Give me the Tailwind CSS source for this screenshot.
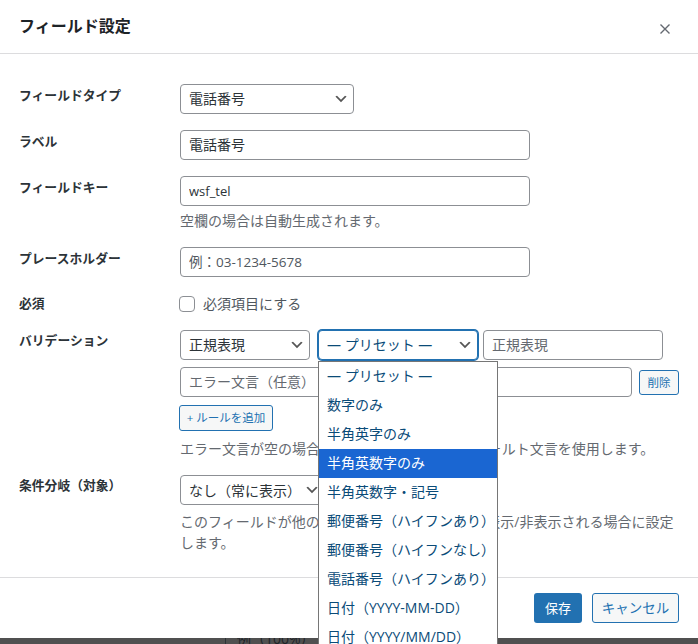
<!DOCTYPE html>
<html lang="ja">
<head>
<meta charset="utf-8">
<title>フィールド設定</title>
<script src="https://cdn.jsdelivr.net/npm/@tailwindcss/browser@4"></script>
</head>
<body class="bg-[#505050] font-['Open_Sans','Noto_Sans_CJK_JP',sans-serif] text-[14px] leading-[21px] text-[#2c3338] overflow-hidden">
<div class="relative w-[698px] h-[644px] overflow-hidden">
  <div class="absolute left-[225px] top-[629px] h-[15px] text-[14px] leading-[20px] text-[#1d2327] border-l border-[#2c3338] pl-[11px]">例（100%）</div>
  <div class="relative bg-white h-[638px] w-[698px]">
    <header class="h-[54px] border-b border-[#dcdcde] flex items-center justify-between pl-[19px] pr-[26px]">
      <h2 class="text-[16px] font-semibold leading-[24px] -mt-[1px] text-[#1d2327]">フィールド設定</h2>
      <svg class="w-[14px] h-[14px] mt-[4px] text-[#646970]" viewBox="0 0 14 14" fill="none" stroke="currentColor" stroke-width="1.4"><path d="M2.5 2.5l9 9M11.5 2.5l-9 9"/></svg>
    </header>
    <main class="pt-[30px] pl-[19px] h-[524px] border-b border-[#dcdcde]">
      <div class="flex mb-[16px]">
        <label class="w-[161px] font-semibold text-[12.8px] leading-[21px] pt-[1px] text-[#2c3338]">フィールドタイプ</label>
        <div class="relative w-[174px]">
          <select class="appearance-none w-full h-[30px] border border-[#8c8f94] rounded-[4px] bg-white pl-[8px] leading-[28px]"><option>電話番号</option></select>
          <svg class="absolute right-[5px] top-[7px] w-[16px] h-[16px] pointer-events-none" viewBox="0 0 20 20" fill="#555"><path d="M5 6l5 5 5-5 2 1-7 7-7-7 2-1z"/></svg>
        </div>
      </div>
      <div class="flex mb-[16px]">
        <label class="w-[161px] font-semibold text-[12.8px] leading-[21px] pt-[1px]">ラベル</label>
        <input class="w-[350px] h-[30px] border border-[#8c8f94] rounded-[4px] px-[8px] pb-[2px]" value="電話番号">
      </div>
      <div class="flex mb-[16px]">
        <label class="w-[161px] font-semibold text-[12.8px] leading-[21px] pt-[1px]">フィールドキー</label>
        <div>
          <input class="block w-[350px] h-[30px] border border-[#8c8f94] rounded-[4px] px-[8px] text-[13px]" value="wsf_tel">
          <p class="mt-[4px] text-[#646970]">空欄の場合は自動生成されます。</p>
        </div>
      </div>
      <div class="flex mb-[16px]">
        <label class="w-[161px] font-semibold text-[12.8px] leading-[21px] pt-[1px]">プレースホルダー</label>
        <input class="w-[350px] h-[30px] border border-[#8c8f94] rounded-[4px] px-[8px] text-[13.5px] placeholder:text-[#50575e]" placeholder="例：03-1234-5678">
      </div>
      <div class="flex mb-[16px]">
        <label class="w-[161px] font-semibold text-[12.8px] leading-[21px]">必須</label>
        <label class="flex items-center text-[#50575e]">
          <span class="w-[16px] h-[16px] -ml-[1px] border border-[#8c8f94] rounded-[4px] bg-white mr-[8px]"></span>必須項目にする
        </label>
      </div>
      <div class="flex mb-[16px]">
        <label class="w-[161px] font-semibold text-[12.8px] leading-[21px]">バリデーション</label>
        <div>
          <div class="flex gap-[8px] mb-[7px]">
            <div class="relative w-[130px]">
              <select class="appearance-none w-full h-[30px] border border-[#8c8f94] rounded-[4px] bg-white pl-[8px] pb-[2px]"><option>正規表現</option></select>
              <svg class="absolute right-[5px] top-[7px] w-[16px] h-[16px] pointer-events-none" viewBox="0 0 20 20" fill="#555"><path d="M5 6l5 5 5-5 2 1-7 7-7-7 2-1z"/></svg>
            </div>
            <div class="relative w-[160px]">
              <select class="appearance-none w-full h-[30px] border border-[#2271b1] shadow-[0_0_0_1px_#2271b1] rounded-[4px] bg-white pl-[8px] pb-[2px] text-[#0a4b78]"><option>— プリセット —</option></select>
              <svg class="absolute right-[5px] top-[7px] w-[16px] h-[16px] pointer-events-none" viewBox="0 0 20 20" fill="#555"><path d="M5 6l5 5 5-5 2 1-7 7-7-7 2-1z"/></svg>
            </div>
            <input class="w-[180px] h-[30px] border border-[#8c8f94] rounded-[4px] px-[8px] pb-[2px] -ml-[3px] placeholder:text-[#646970]" placeholder="正規表現">
          </div>
          <div class="flex items-center gap-[7px] mb-[8px]">
            <input class="w-[452px] h-[30px] border border-[#8c8f94] rounded-[4px] px-[8px] pb-[2px] placeholder:text-[#646970]" placeholder="エラー文言（任意）">
            <button class="w-[40px] h-[25px] border border-[#2271b1] rounded-[3px] bg-[#f6f7f7] text-[#2271b1] text-[11.5px] leading-[23px]">削除</button>
          </div>
          <button class="block w-[94px] h-[26px] -ml-[1px] border border-[#2271b1] rounded-[3px] bg-[#f6f7f7] text-[#2271b1] text-[11.5px] leading-[24px]">+ ルールを追加</button>
          <p class="mt-[7px] text-[#646970] whitespace-nowrap">エラー文言が空の場合はバリデーション毎のデフォルト文言を使用します。</p>
        </div>
      </div>
      <div class="flex">
        <label class="w-[161px] font-semibold text-[12.8px] leading-[21px]">条件分岐（対象）</label>
        <div class="w-[497px]">
          <div class="relative w-[145px]">
            <select class="appearance-none w-full h-[30px] border border-[#8c8f94] rounded-[4px] bg-white pl-[8px]"><option>なし（常に表示）</option></select>
            <svg class="absolute right-[5px] top-[7px] w-[16px] h-[16px] pointer-events-none" viewBox="0 0 20 20" fill="#555"><path d="M5 6l5 5 5-5 2 1-7 7-7-7 2-1z"/></svg>
          </div>
          <p class="mt-[6px] text-[#646970]">このフィールドが他のフィールドの入力によって表示/非表示される場合に設定します。</p>
        </div>
      </div>
    </main>
    <footer class="flex justify-end gap-[10px] pt-[15px] pr-[19px]">
      <button class="w-[48px] h-[30px] rounded-[3px] bg-[#2271b1] text-white text-[13px]">保存</button>
      <button class="w-[87px] h-[30px] rounded-[3px] border border-[#2271b1] bg-[#f6f7f7] text-[#2271b1] text-[13.5px]">キャンセル</button>
    </footer>
    <ul class="absolute left-[318px] top-[361px] w-[180px] border border-[#767676] bg-white text-[#0a4b78]">
      <li class="h-[29px] pl-[8px] leading-[27px]">— プリセット —</li>
      <li class="h-[29px] pl-[8px] leading-[27px]">数字のみ</li>
      <li class="h-[29px] pl-[8px] leading-[27px]">半角英字のみ</li>
      <li class="h-[29px] pl-[8px] leading-[27px] bg-[#1a66d2] text-white">半角英数字のみ</li>
      <li class="h-[29px] pl-[8px] leading-[27px]">半角英数字・記号</li>
      <li class="h-[29px] pl-[8px] leading-[27px]">郵便番号（ハイフンあり）</li>
      <li class="h-[29px] pl-[8px] leading-[27px]">郵便番号（ハイフンなし）</li>
      <li class="h-[29px] pl-[8px] leading-[27px]">電話番号（ハイフンあり）</li>
      <li class="h-[29px] pl-[8px] leading-[27px]">日付（YYYY-MM-DD）</li>
      <li class="h-[29px] pl-[8px] leading-[27px]">日付（YYYY/MM/DD）</li>
    </ul>
  </div>
</div>
</body>
</html>
